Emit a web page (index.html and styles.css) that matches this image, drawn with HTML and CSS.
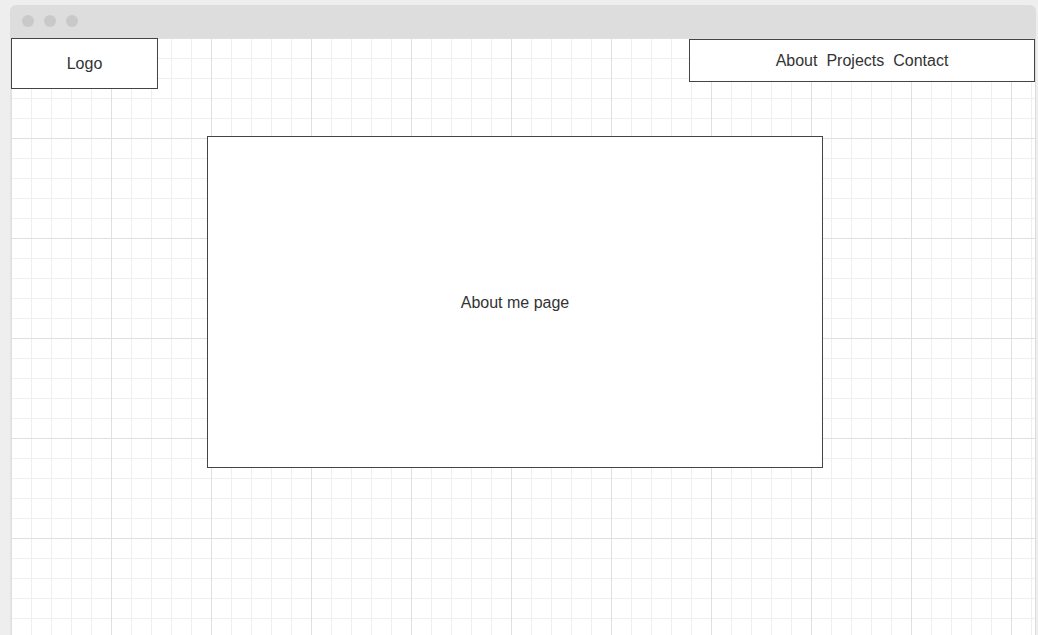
FILE: index.html
```html
<!DOCTYPE html>
<html>
<head>
<meta charset="utf-8">
<link rel="stylesheet" href="styles.css">
</head>
<body>
<div class="window">
  <div class="titlebar">
    <span class="dot"></span>
    <span class="dot"></span>
    <span class="dot"></span>
  </div>
  <div class="canvas">
    <header class="header">
      <div class="logo">Logo</div>
      <nav class="nav">
        <span>About</span>
        <span>Projects</span>
        <span>Contact</span>
      </nav>
    </header>
    <main class="main">About me page</main>
  </div>
</div>
</body>
</html>
```

FILE: styles.css
```css
html, body {
  margin: 0;
  padding: 0;
}
body {
  background: #eeeeee;
  font-family: "Liberation Sans", Arial, sans-serif;
  font-size: 16px;
  color: #333333;
  height: 635px;
  overflow: hidden;
}
.window {
  margin: 5px 2px 0 10px;
  height: 630px;
  display: flex;
  flex-direction: column;
}
.titlebar {
  height: 33px;
  background: #dddddd;
  border-radius: 6px 6px 0 0;
  display: flex;
  align-items: center;
  gap: 10px;
  padding-left: 12px;
  padding-bottom: 1px;
  box-sizing: border-box;
}
.dot {
  width: 12px;
  height: 12px;
  border-radius: 50%;
  background: #c9c9c9;
}
.canvas {
  flex: 1;
  border-left: 1px solid #e4e4e4;
  border-right: 1px solid #dddddd;
  background-color: #ffffff;
  background-image:
    linear-gradient(to right, #e0e0e0 1px, transparent 1px),
    linear-gradient(to bottom, #e0e0e0 1px, transparent 1px),
    linear-gradient(to right, #efefef 1px, transparent 1px),
    linear-gradient(to bottom, #efefef 1px, transparent 1px);
  background-size: 100px 100px, 100px 100px, 20px 20px, 20px 20px;
}
.header {
  display: flex;
  justify-content: space-between;
  align-items: flex-start;
}
.logo {
  width: 145px;
  height: 49px;
  border: 1px solid #444444;
  background: #ffffff;
  display: flex;
  align-items: center;
  justify-content: center;
}
.nav {
  margin-top: 1px;
  width: 344px;
  height: 41px;
  border: 1px solid #444444;
  background: #ffffff;
  display: flex;
  align-items: center;
  justify-content: center;
  gap: 9px;
}
.main {
  margin: 47px 0 0 196px;
  width: 614px;
  height: 328px;
  padding-top: 2px;
  border: 1px solid #444444;
  background: #ffffff;
  display: flex;
  align-items: center;
  justify-content: center;
}
```
